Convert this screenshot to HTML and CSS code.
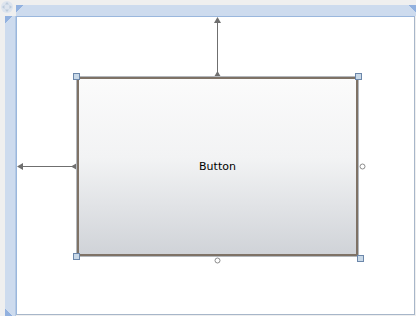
FILE: index.html
```html
<!DOCTYPE html>
<html>
<head>
<meta charset="utf-8">
<link rel="stylesheet" href="styles.css">
</head>
<body>
<div class="designer">
  <svg class="move-icon" width="14" height="14" viewBox="0 0 14 14">
    <circle cx="7" cy="7" r="6" fill="#dde4ee"/>
    <path d="M7 2 L9 4.5 L5 4.5 Z M7 12 L9 9.5 L5 9.5 Z M2 7 L4.5 5 L4.5 9 Z M12 7 L9.5 5 L9.5 9 Z" fill="#bccadb"/>
  </svg>
  <div class="ruler ruler-top"></div>
  <div class="ruler ruler-left"></div>
  <div class="canvas">
    <svg class="guides" width="397" height="297" viewBox="17 17 397 297">
      <g stroke="#6f6f6f" stroke-width="1" fill="none">
        <line x1="217.5" y1="20" x2="217.5" y2="74"/>
        <line x1="20" y1="166.5" x2="74" y2="166.5"/>
      </g>
      <g fill="#6f6f6f">
        <path d="M217.5 17 L221 23 L214 23 Z"/>
        <path d="M217.5 71 L221 77 L214 77 Z"/>
        <path d="M17 166.5 L23 163 L23 170 Z"/>
        <path d="M71 166.5 L77 163 L77 170 Z"/>
      </g>
      <g fill="#fff" stroke="#8c8c8c" stroke-width="1">
        <circle cx="362.5" cy="166.5" r="2.5"/>
        <circle cx="217.5" cy="260.5" r="2.5"/>
      </g>
    </svg>
    <div class="button">Button</div>
    <span class="handle h-tl"></span>
    <span class="handle h-tr"></span>
    <span class="handle h-bl"></span>
    <span class="handle h-br"></span>
  </div>
</div>
</body>
</html>
```
FILE: styles.css
```css
html, body {
  margin: 0;
  padding: 0;
  background: #efefef;
}
.designer {
  position: relative;
  width: 416px;
  height: 316px;
  box-sizing: border-box;
  padding: 5px 0 0 5px;
  display: grid;
  grid-template-columns: 11px 1fr;
  grid-template-rows: 11px 1fr;
  overflow: hidden;
}
.move-icon {
  position: absolute;
  left: 0;
  top: 0;
}
.ruler-top {
  grid-column: 2;
  grid-row: 1;
  background:
    linear-gradient(135deg, #92b1df 0 5px, transparent 5px),
    linear-gradient(225deg, #92b1df 0 5px, transparent 5px),
    #cddbee;
}
.ruler-left {
  grid-column: 1;
  grid-row: 2;
  border-right: 1px solid #b4c9e4;
  background:
    linear-gradient(135deg, #92b1df 0 5px, transparent 5px),
    linear-gradient(45deg, #92b1df 0 5px, transparent 5px),
    #cddbee;
}
.canvas {
  grid-column: 2;
  grid-row: 2;
  position: relative;
  background: #ffffff;
  margin: 0 1px 1px 0;
  border: 1px solid #a7b6c9;
  border-top-color: #9ab7dd;
  border-left-color: #9ab7dd;
}
.guides {
  position: absolute;
  left: 0;
  top: 0;
}
.button {
  position: absolute;
  left: 60px;
  top: 60px;
  width: 277px;
  height: 175px;
  border: 2px solid #7e7266;
  box-shadow: 0 0 0 1px #b4b8bd;
  background: linear-gradient(#fbfbfb 0%, #f2f3f4 45%, #d0d3d8 100%);
  display: flex;
  align-items: center;
  justify-content: center;
  font-family: "DejaVu Sans", sans-serif;
  font-size: 11px;
  color: #000;
}
.handle {
  position: absolute;
  width: 5px;
  height: 5px;
  background: #c9d9e8;
  border: 1px solid #6c87aa;
}
.h-tl { left: 56px; top: 56px; }
.h-tr { left: 338px; top: 56px; }
.h-bl { left: 56px; top: 236px; }
.h-br { left: 340px; top: 238px; }
```
